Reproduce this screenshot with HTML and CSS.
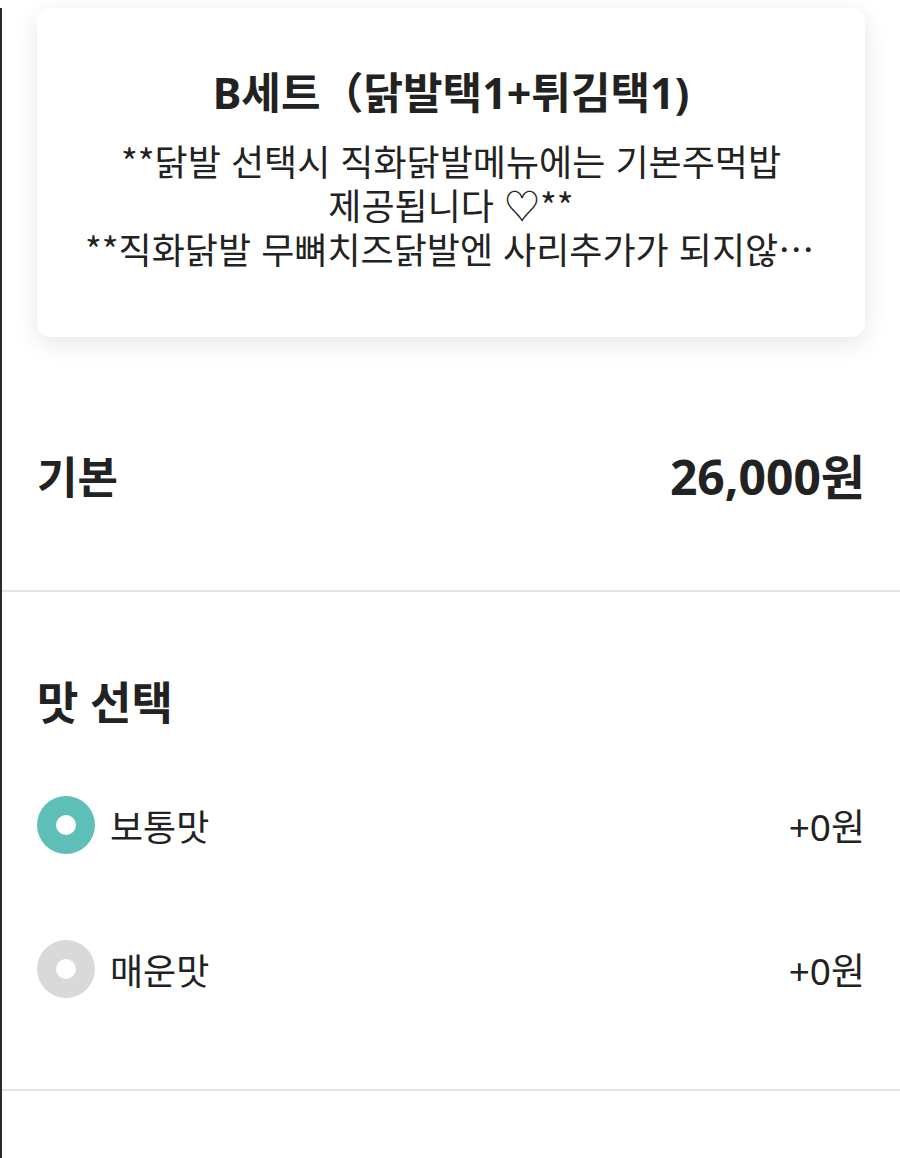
FILE: index.html
```html
<!DOCTYPE html>
<html lang="ko">
<head>
<meta charset="utf-8">
<link rel="stylesheet" href="styles.css">
</head>
<body>
<div class="page">
  <div class="card">
    <h1 class="card-title">B세트（닭발택1+튀김택1)</h1>
    <div class="card-desc">
      <p class="desc-text">**닭발 선택시 직화닭발메뉴에는 기본주먹밥 제공됩니다 ♡**</p>
      <p class="desc-text desc-clip">**직화닭발 무뼈치즈닭발엔 사리추가가 되지않습니다 참고해주세요**</p>
    </div>
  </div>
  <div class="base-row">
    <span class="base-label">기본</span>
    <span class="base-price">26,000원</span>
  </div>
  <div class="divider"></div>
  <div class="option-group">
    <h2 class="group-title">맛 선택</h2>
    <div class="option">
      <span class="radio radio-on"></span>
      <span class="option-label">보통맛</span>
      <span class="option-price">+0원</span>
    </div>
    <div class="option">
      <span class="radio"></span>
      <span class="option-label">매운맛</span>
      <span class="option-price">+0원</span>
    </div>
  </div>
  <div class="divider"></div>
</div>
</body>
</html>
```
FILE: styles.css
```css
html, body {
  margin: 0;
  padding: 0;
  background: #ffffff;
}
body {
  font-family: "Noto Sans", "Noto Sans CJK KR", sans-serif;
  color: #222222;
}
.page {
  border-left: 2px solid #2a2a2a;
  min-height: 1158px;
  box-sizing: border-box;
}
.card {
  margin: 8px 35px 0 35px;
  background: #ffffff;
  border-radius: 14px;
  box-shadow: 0 6px 24px rgba(0, 0, 0, 0.1);
  padding: 57px 48px 67px;
  text-align: center;
}
.card-title {
  margin: 0;
  font-size: 43px;
  line-height: 56px;
  font-weight: 700;
  color: #222222;
}
.card-desc {
  margin: 17px 0 0;
  font-family: "Noto Sans CJK KR", sans-serif;
  font-size: 36px;
  line-height: 44px;
  font-weight: 400;
  color: #222222;
}
.desc-text {
  margin: 0;
  word-break: keep-all;
}
.desc-clip {
  white-space: nowrap;
  overflow: hidden;
  text-overflow: ellipsis;
}
.base-row {
  display: flex;
  justify-content: space-between;
  align-items: center;
  padding: 110px 35px 83px 35px;
  font-size: 44px;
  line-height: 60px;
  font-weight: 700;
}
.base-price {
  font-size: 48px;
}
.divider {
  height: 2px;
  background: #e4e4e4;
}
.option-group {
  padding: 81px 35px 90px 35px;
}
.group-title {
  margin: 0 0 62px;
  font-size: 45px;
  line-height: 60px;
  font-weight: 700;
}
.option {
  display: flex;
  align-items: center;
  height: 60px;
  margin-bottom: 84px;
}
.option:last-child {
  margin-bottom: 0;
}
.radio {
  width: 58px;
  height: 58px;
  border-radius: 50%;
  background: #d9d9d9;
  display: flex;
  align-items: center;
  justify-content: center;
  flex-shrink: 0;
}
.radio::after {
  content: "";
  width: 20px;
  height: 20px;
  border-radius: 50%;
  background: #ffffff;
}
.radio-on {
  background: #5dbfb7;
}
.option-label {
  margin-left: 15px;
  font-size: 36px;
  flex: 1;
}
.option-price {
  font-size: 37px;
}
```
